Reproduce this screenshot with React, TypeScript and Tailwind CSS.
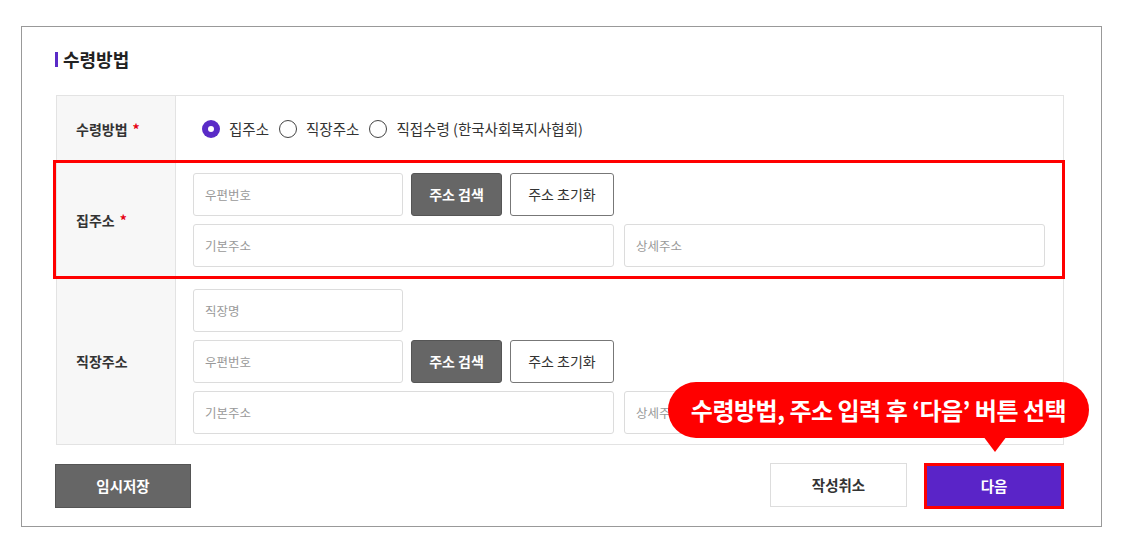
import React from 'react'

const font = { fontFamily: '"Noto Sans CJK KR", "Noto Sans", sans-serif' }

function Input({ placeholder, className = '' }: { placeholder: string; className?: string }) {
  return (
    <input
      placeholder={placeholder}
      className={`h-[43px] border border-[#dcdcdc] rounded-[3px] bg-white px-[11px] text-[12.5px] text-[#333] placeholder:text-[#999] outline-none ${className}`}
    />
  )
}

function PostRow() {
  return (
    <div className="flex gap-2">
      <Input placeholder="우편번호" className="w-[210px]" />
      <button className="w-[91px] h-[43px] rounded-[3px] bg-[#666] border border-[#555] text-white text-[14px] font-bold">
        주소 검색
      </button>
      <button className="w-[104px] h-[43px] rounded-[3px] bg-white border border-[#777] text-[#333] text-[14px]">
        주소 초기화
      </button>
    </div>
  )
}

function Radio({ label, checked }: { label: string; checked?: boolean }) {
  return (
    <label className="flex items-center gap-[9px] mr-[10px]">
      {checked ? (
        <span className="w-[18px] h-[18px] rounded-full bg-[#5a2bc7] flex items-center justify-center">
          <span className="w-[6px] h-[6px] rounded-full bg-white" />
        </span>
      ) : (
        <span className="w-[18px] h-[18px] rounded-full border-[1.5px] border-[#444] bg-white" />
      )}
      <span className="text-[14.5px] text-[#333]">{label}</span>
    </label>
  )
}

function Label({ text, required }: { text: string; required?: boolean }) {
  return (
    <div className="w-[119px] shrink-0 bg-[#f7f7f7] border-r border-[#e3e3e3] flex items-center pl-[19px] text-[14px] font-bold text-[#333]">
      {text}
      {required && <span className="text-[#e60012] ml-[5px]">*</span>}
    </div>
  )
}

export default function App() {
  return (
    <div className="w-[1123px] h-[552px] bg-white pt-[26px] pl-[21px]" style={font}>
      <div className="relative w-[1081px] h-[501px] border border-[#999] pl-[33px] pt-[21px]">
        <div className="flex items-center gap-[5px] h-[22px]">
          <span className="w-[3px] h-[15px] bg-[#5a2bc7]" />
          <h2 className="text-[18px] font-bold text-[#222]">수령방법</h2>
        </div>

        <div className="mt-[25px] ml-px w-[1008px] border border-[#e3e3e3]">
          <div className="flex h-[66px]">
            <Label text="수령방법" required />
            <div className="flex items-center pl-[26px]">
              <Radio label="집주소" checked />
              <Radio label="직장주소" />
              <Radio label="직접수령 (한국사회복지사협회)" />
            </div>
          </div>

          <div className="relative flex h-[116px] border-t border-[#e3e3e3]">
            <Label text="집주소" required />
            <div className="flex flex-col gap-2 pl-[17px] py-[10px]">
              <PostRow />
              <div className="flex gap-[10px]">
                <Input placeholder="기본주소" className="w-[421px]" />
                <Input placeholder="상세주소" className="w-[421px]" />
              </div>
            </div>
            <div className="absolute left-[-4px] right-[-2px] top-[-3px] bottom-[-1px] border-[3px] border-[#ff0000] pointer-events-none" />
          </div>

          <div className="flex h-[166px] border-t border-[#e3e3e3]">
            <Label text="직장주소" />
            <div className="flex flex-col gap-2 pl-[17px] py-[10px]">
              <Input placeholder="직장명" className="w-[210px]" />
              <PostRow />
              <div className="flex gap-[10px]">
                <Input placeholder="기본주소" className="w-[421px]" />
                <Input placeholder="상세주소" className="w-[421px]" />
              </div>
            </div>
          </div>
        </div>

        <div className="flex items-center w-[1009px] mt-[18px]">
          <button className="w-[136px] h-[44px] bg-[#666] border border-[#555] text-white text-[14.5px] font-bold">
            임시저장
          </button>
          <div className="ml-auto flex gap-[17px]">
            <button className="w-[137px] h-[44px] bg-white border border-[#ddd] text-[#333] text-[14.5px] font-bold">
              작성취소
            </button>
            <button className="w-[140px] h-[46px] bg-[#5a24c8] border-[3px] border-[#ff0000] text-white text-[14.5px] font-bold">
              다음
            </button>
          </div>
        </div>

        {/* callout */}
        <div className="absolute left-[646px] top-[355px]">
          <div className="relative h-[56px] w-[421px] rounded-full bg-[#ff0000] flex items-center justify-center">
            <span className="text-white text-[24px] font-bold tracking-[-0.5px]">
              수령방법, 주소 입력 후 ‘다음’ 버튼 선택
            </span>
            <span className="absolute left-[315px] top-[54px] w-0 h-0 border-l-[12px] border-r-[12px] border-t-[16px] border-l-transparent border-r-transparent border-t-[#ff0000]" />
          </div>
        </div>
      </div>
    </div>
  )
}
